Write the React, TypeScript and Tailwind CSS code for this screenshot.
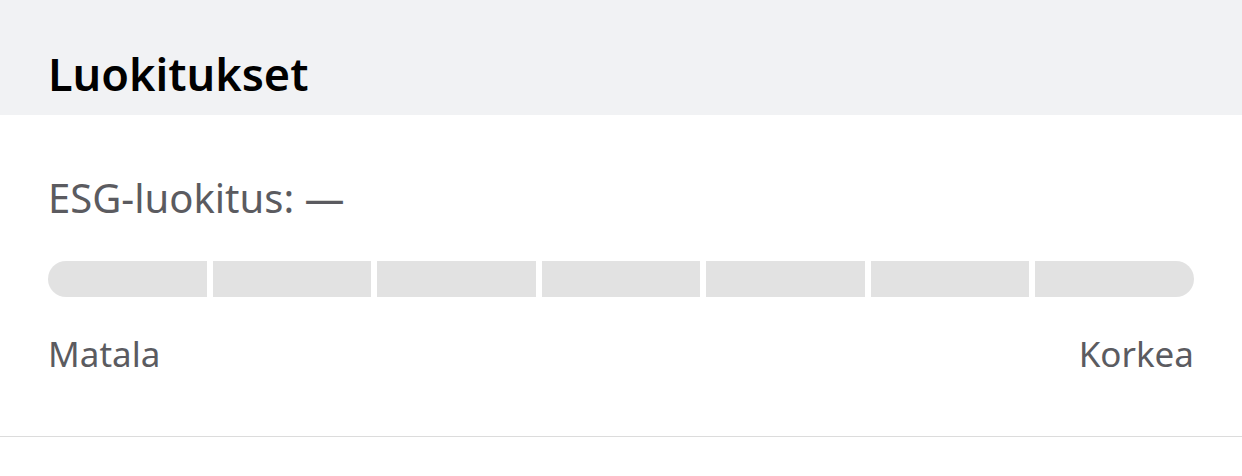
export default function App() {
  const segments = [0, 1, 2, 3, 4, 5, 6];
  return (
    <div className="w-[1242px] h-[476px] bg-white" style={{ fontFamily: '"Noto Sans", sans-serif' }}>
      <div className="h-[115px] bg-[#f1f2f4] px-12 pt-[46px]">
        <h2 className="text-[45px] leading-[56px] font-semibold text-black">Luokitukset</h2>
      </div>
      <div className="px-12 pt-[60px] pb-[59px] border-b border-[#dcdcdc]">
        <p className="text-[40px] leading-[46px] text-[#5b5b60]">ESG-luokitus: —</p>
        <div className="mt-[40px] flex gap-[6px]">
          {segments.map((i) => (
            <div
              key={i}
              className={
                "h-[36px] flex-1 bg-[#e2e2e2] " +
                (i === 0 ? "rounded-l-full" : i === 6 ? "rounded-r-full" : "")
              }
            />
          ))}
        </div>
        <div className="mt-[34px] flex justify-between text-[35px] leading-[46px] text-[#5b5b60]">
          <span>Matala</span>
          <span>Korkea</span>
        </div>
      </div>
    </div>
  );
}
